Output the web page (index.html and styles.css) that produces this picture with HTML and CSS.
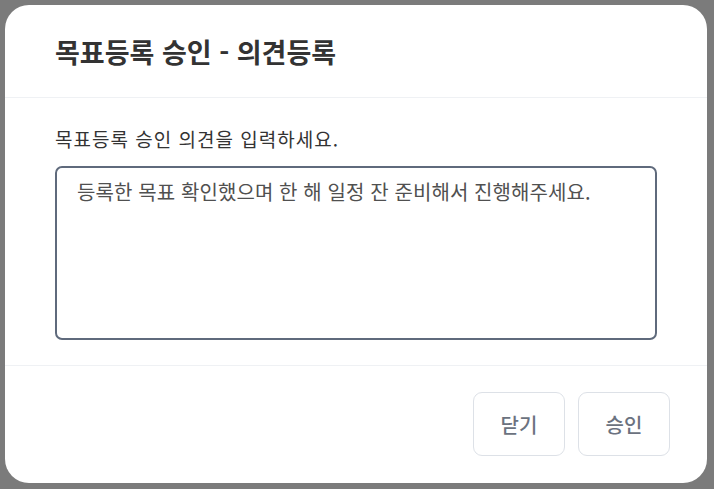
FILE: index.html
```html
<!DOCTYPE html>
<html lang="ko">
<head>
    <meta charset="UTF-8">
    <meta name="viewport" content="width=device-width, initial-scale=1.0">
    <title>목표등록 승인 - 의견등록</title>
    <link rel="stylesheet" href="styles.css">
</head>
<body>
    <div class="overlay">
        <div class="modal">
            <div class="modal-header">
                <h2>목표등록 승인 - 의견등록</h2>
            </div>

            <div class="modal-body">
                <label for="opinion">목표등록 승인 의견을 입력하세요.</label>
                <textarea id="opinion">등록한 목표 확인했으며 한 해 일정 잔 준비해서 진행해주세요.</textarea>
            </div>

            <div class="modal-footer">
                <button type="button" class="btn">닫기</button>
                <button type="button" class="btn">승인</button>
            </div>
        </div>
    </div>
</body>
</html>
```

FILE: styles.css
```css
html, body {
    margin: 0;
    padding: 0;
    height: 100%;
}

body {
    font-family: "Noto Sans CJK KR", "Noto Sans", sans-serif;
    background-color: #7b7b7b;
    color: #333;
}

.overlay {
    height: 100%;
    padding: 5px 7px 6px 5px;
    box-sizing: border-box;
    display: flex;
}

.modal {
    flex: 1;
    background-color: #fff;
    border-radius: 24px;
    display: flex;
    flex-direction: column;
    overflow: hidden;
}

.modal-header {
    height: 92px;
    padding-left: 50px;
    display: flex;
    align-items: center;
    border-bottom: 1px solid #eff1f4;
}

.modal-header h2 {
    margin: 0;
    font-size: 27px;
    font-weight: 700;
    color: #333;
}

.modal-body {
    padding: 27px 50px 25px 50px;
    display: flex;
    flex-direction: column;
    border-bottom: 1px solid #eff1f4;
}

label {
    font-size: 19px;
    line-height: 28px;
    letter-spacing: 1px;
    color: #333;
    margin-bottom: 13px;
}

textarea {
    height: 174px;
    box-sizing: border-box;
    padding: 9px 20px;
    border: 2px solid #5f6a7c;
    border-radius: 7px;
    font-family: inherit;
    font-size: 20px;
    line-height: 30px;
    letter-spacing: 0.1px;
    color: #505050;
    resize: none;
    outline: none;
}

.modal-footer {
    flex: 1;
    display: flex;
    justify-content: flex-end;
    align-items: flex-start;
    gap: 13px;
    padding: 26px 37px 0 0;
}

.btn {
    width: 92px;
    height: 64px;
    background-color: #fff;
    border: 1.5px solid #dde1e7;
    border-radius: 9px;
    font-family: inherit;
    font-size: 20px;
    font-weight: 500;
    color: #6b7280;
    cursor: pointer;
}
```
